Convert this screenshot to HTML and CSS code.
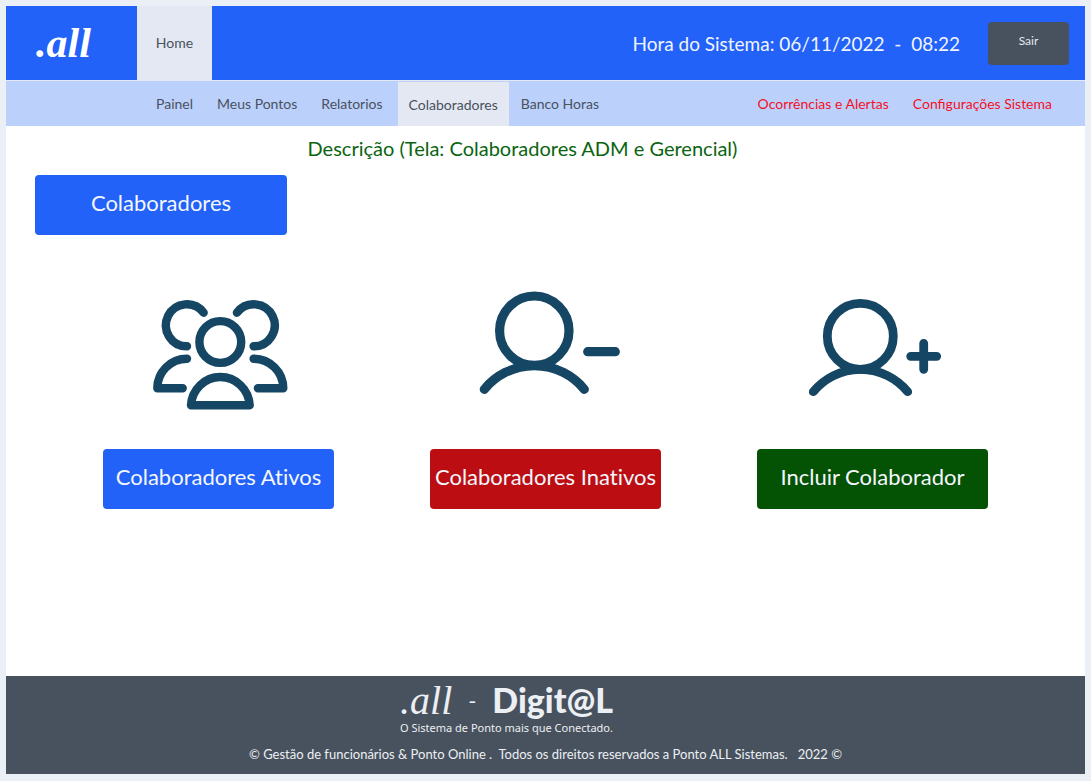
FILE: index.html
```html
<!DOCTYPE html>
<html lang="pt-BR">
<head>
<meta charset="utf-8">
<meta name="viewport" content="width=device-width, initial-scale=1">
<title>Colaboradores - .all</title>
<link rel="stylesheet" href="styles.css">
</head>
<body>
<header class="topbar">
  <a class="brand" href="#">.all</a>
  <a class="home" href="#">Home</a>
  <p class="clock">Hora do Sistema: 06/11/2022 &nbsp;-&nbsp; 08:22</p>
  <button class="logout" type="button">Sair</button>
</header>
<nav class="subnav">
  <a href="#">Painel</a>
  <a href="#">Meus Pontos</a>
  <a href="#">Relatorios</a>
  <a class="active" href="#" aria-current="page">Colaboradores</a>
  <a href="#">Banco Horas</a>
  <div class="alerts">
    <a href="#">Ocorrências e Alertas</a>
    <a href="#">Configurações Sistema</a>
  </div>
</nav>
<main class="content">
  <h1 class="description">Descrição (Tela: Colaboradores ADM e Gerencial)</h1>
  <button class="btn section" type="button">Colaboradores</button>
  <div class="cards">
    <section class="card">
      <svg class="icon" viewBox="0 0 160 130" stroke-width="8.4" aria-hidden="true">
        <circle cx="81.3" cy="57" r="20.9"/>
        <path d="M64.7 27.7A21 21 0 1 0 48 61.3"/>
        <path d="M97.9 27.7A21 21 0 1 1 114.6 61.3"/>
        <path d="M48 73.7A29.7 29.7 0 0 0 18.3 103.3H43.7"/>
        <path d="M114.6 73.7A29.7 29.7 0 0 1 144.3 103.3H118.9"/>
        <path d="M52 120.3A29.4 30 0 0 1 110.7 120.3Z"/>
      </svg>
      <button class="btn" type="button">Colaboradores Ativos</button>
    </section>
    <section class="card">
      <svg class="icon" viewBox="0 0 160 130" stroke-width="9.2" aria-hidden="true">
        <circle cx="68.3" cy="45.7" r="34.7"/>
        <path d="M18.3 104.3A64.6 64.6 0 0 1 118.3 104.3M121.7 66.7H149.3"/>
      </svg>
      <button class="btn danger" type="button">Colaboradores Inativos</button>
    </section>
    <section class="card">
      <svg class="icon" viewBox="0 0 160 130" stroke-width="8.8" aria-hidden="true">
        <circle cx="67.3" cy="51.3" r="33"/>
        <path d="M20.3 106.7A61 61 0 0 1 114.7 106.7M117.7 71.3H143.7M130.7 58.3V84.3"/>
      </svg>
      <button class="btn success" type="button">Incluir Colaborador</button>
    </section>
  </div>
</main>
<footer class="footer">
  <div class="signature">
    <p class="wordmark"><span class="script">.all</span><span class="dash">-</span><span class="name">Digit@L</span></p>
    <p class="tagline">O Sistema de Ponto mais que Conectado.</p>
  </div>
  <p class="copyright">© Gestão de funcionários &amp; Ponto Online . &nbsp;Todos os direitos reservados a Ponto ALL Sistemas. &nbsp; 2022 ©</p>
</footer>
</body>
</html>
```
FILE: styles.css
```css
* {
  box-sizing: border-box;
}

body {
  display: flex;
  flex-direction: column;
  min-height: 100vh;
  margin: 0;
  padding: 6px 6px 7px;
  background: #ebeff6;
  color: #48525e;
  font-family: Lato, sans-serif;
  font-size: 14px;
}

h1,
p {
  margin: 0;
  font-weight: 400;
}

a {
  color: inherit;
  text-decoration: none;
}

button {
  border: 0;
  border-radius: 4px;
  color: #f4f7fd;
  font-family: inherit;
  cursor: pointer;
}

.topbar {
  display: flex;
  align-items: center;
  height: 74px;
  padding-right: 16px;
  background: #2262f8;
}

.brand {
  width: 131px;
  padding-left: 30px;
  color: #fff;
  font-family: "Liberation Serif", serif;
  font-size: 42px;
  font-style: italic;
  font-weight: 700;
  line-height: 48px;
}

.home {
  display: flex;
  align-items: center;
  justify-content: center;
  width: 75px;
  height: 100%;
  padding-bottom: 2px;
  background: #e4e8f2;
}

.clock {
  margin-left: auto;
  color: #f0f4fe;
  font-size: 19px;
}

.logout {
  width: 81px;
  height: 43px;
  margin-left: 28px;
  padding: 0 0 6px;
  background: #48525e;
  color: #e4e8f2;
  font-size: 12px;
}

.subnav {
  display: flex;
  height: 46px;
  padding: 0 21px 0 138px;
  border-top: 1px solid #e4e8f2;
  background: #bcd0fc;
}

.subnav a {
  display: flex;
  align-items: center;
  padding: 0 12px;
}

.subnav .active {
  margin: 1px 0 -1px 3px;
  padding: 0 11px;
  background: #e4e8f2;
}

.alerts {
  display: flex;
  margin-left: auto;
  color: #f5101f;
}

.content {
  flex: 1;
  padding: 10px 29px;
}

.content,
.description {
  background: #fff;
}

.description {
  padding-right: 46px;
  color: #0a6410;
  font-size: 20px;
  line-height: 24px;
  text-align: center;
}

.btn {
  width: 100%;
  height: 60px;
  padding: 0 0 6px;
  background: #2262f8;
  font-size: 22px;
  font-variant-ligatures: none;
  white-space: nowrap;
}

.section {
  display: block;
  width: 252px;
  margin-top: 15px;
}

.danger {
  background: #bc0e12;
}

.success {
  background: #045204;
}

.cards {
  display: grid;
  grid-template-columns: repeat(3, 1fr);
  margin: 50px 20px 0;
}

.card {
  display: flex;
  flex-direction: column;
  align-items: center;
  gap: 34px;
  padding: 0 48px;
}

.icon {
  width: 160px;
  height: 130px;
  fill: none;
  stroke: #154664;
  stroke-linecap: round;
  stroke-linejoin: round;
}

.footer {
  display: flex;
  flex-direction: column;
  align-items: center;
  height: 98px;
  padding-top: 5px;
  background: #48525e;
  color: #eceff3;
}

.signature {
  margin-right: 78px;
}

.wordmark {
  display: flex;
  align-items: center;
  justify-content: space-between;
  height: 38px;
}

.script {
  font-family: "Liberation Serif", serif;
  font-size: 40px;
  font-style: italic;
}

.dash {
  font-size: 22px;
}

.name {
  font-size: 34px;
  font-weight: 900;
  line-height: 34px;
}

.tagline {
  font-family: "Noto Sans", sans-serif;
  font-size: 11px;
  line-height: 18px;
}

.copyright {
  margin-top: 8px;
  font-size: 13px;
  line-height: 18px;
}
```
